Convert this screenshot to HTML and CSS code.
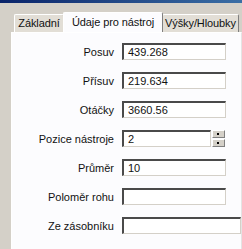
FILE: index.html
```html
<!DOCTYPE html>
<html>
<head>
	<title>Nástroj</title>
	<link rel="stylesheet" href="styles.css">
</head>
<body>
	<div class="titlebar"></div>
	<div class="window">
		<div class="tabs">
			<div class="tab tab-basic">Základní</div>
			<div class="tab active">Údaje pro nástroj</div>
			<div class="tab tab-depth">Výšky/Hloubky</div>
		</div>
		<div class="panel">
			<div class="row">
				<label>Posuv</label>
				<div class="field">439.268</div>
			</div>
			<div class="row">
				<label>Přísuv</label>
				<div class="field">219.634</div>
			</div>
			<div class="row">
				<label>Otáčky</label>
				<div class="field">3660.56</div>
			</div>
			<div class="row">
				<label>Pozice nástroje</label>
				<div class="spin">
					<div class="field short">2</div>
					<div class="spin-btns">
						<div class="spin-btn"></div>
						<div class="spin-btn"></div>
					</div>
				</div>
			</div>
			<div class="row">
				<label>Průměr</label>
				<div class="field">10</div>
			</div>
			<div class="row">
				<label>Poloměr rohu</label>
				<div class="field"></div>
			</div>
			<div class="row">
				<label>Ze zásobníku</label>
				<div class="field wide"></div>
			</div>
		</div>
	</div>
</body>
</html>
```

FILE: styles.css
```css
body {
	margin: 0;
	background: #d4d0c8;
	font-family: "Liberation Sans", Arial, sans-serif;
	font-size: 11px;
	color: #111;
	overflow: hidden;
}

.titlebar {
	height: 3px;
	background: linear-gradient(to right, #0a246a, #3a6ea5);
}

.window {
	padding-top: 9px;
	padding-left: 11px;
}

.tabs {
	display: flex;
	align-items: flex-end;
	height: 20px;
	padding-left: 3px;
}

.tab {
	box-sizing: border-box;
	height: 18px;
	line-height: 17px;
	text-align: center;
	background: #e2ded6;
	border: 1px solid #fff;
	border-right-color: #808080;
	border-bottom: none;
	border-radius: 2px 2px 0 0;
	white-space: nowrap;
	letter-spacing: -0.1px;
}

.tab-basic {
	width: 50px;
}

.tab-depth {
	width: 77px;
}

.tab.active {
	position: relative;
	z-index: 1;
	width: 100px;
	height: 20px;
	line-height: 19px;
	margin: 0 -1px;
	background: #fcfcfe;
}

.panel {
	width: 229px;
	height: 210px;
	padding-top: 10px;
	overflow: hidden;
	background: #fcfcfe;
	border-top: 1px solid #fff;
	border-left: 1px solid #fff;
	border-right: 1px solid #e4e4e4;
}

.row {
	display: grid;
	grid-template-columns: 102px auto;
	column-gap: 8px;
	align-items: center;
	margin-bottom: 12px;
}

.row label {
	text-align: right;
	white-space: nowrap;
}

.field {
	box-sizing: border-box;
	width: 104px;
	height: 17px;
	line-height: 14px;
	padding-left: 4px;
	background: #fff;
	border-style: solid;
	border-width: 2px 1px 1px 2px;
	border-color: #4a4a4a #d4d0c8 #d4d0c8 #4a4a4a;
}

.field.short {
	width: 89px;
}

.field.wide {
	width: 119px;
}

.spin {
	display: flex;
	gap: 1px;
}

.spin-btns {
	display: flex;
	flex-direction: column;
	gap: 1px;
}

.spin-btn {
	position: relative;
	box-sizing: border-box;
	width: 13px;
	height: 8px;
	background: #d4d0c8;
	border: 1px solid;
	border-color: #fff #808080 #808080 #fff;
}

.spin-btn:after {
	content: "";
	position: absolute;
	left: 4px;
	top: 2px;
	width: 2px;
	height: 2px;
	background: #000;
}
```
